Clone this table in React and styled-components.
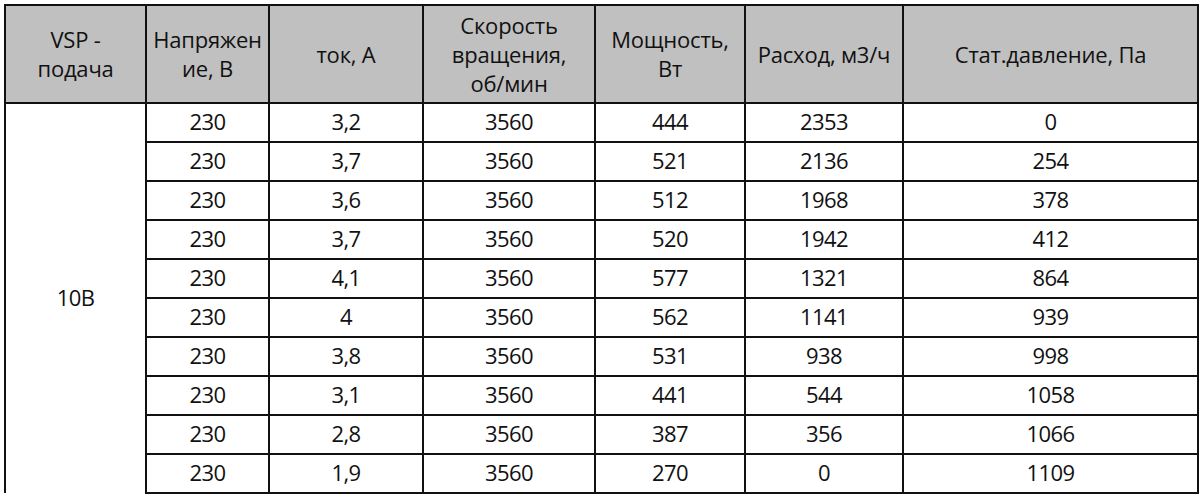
import React from 'react';
import styled, { createGlobalStyle } from 'styled-components';

const Global = createGlobalStyle`
  html, body { margin: 0; background: #fff; }
  body { font-family: "Open Sans", "Noto Sans", sans-serif; color: #111; }
`;

const Page = styled.div`
  padding: 4px 0 0 4px;
`;

const Table = styled.table`
  border-collapse: collapse;
  table-layout: fixed;
  width: 1195px;
  font-size: 22px;
`;

const HeadRow = styled.tr`
  height: 98px;
  background: #c0c0c0;
`;

const Th = styled.th`
  border: 2px solid #111;
  font-weight: 400;
  line-height: 29px;
  text-align: center;
  vertical-align: middle;
  padding: 0;
  white-space: nowrap;
  letter-spacing: -0.2px;
`;

const Row = styled.tr`
  height: 39px;
`;

const Td = styled.td`
  border: 2px solid #111;
  text-align: center;
  vertical-align: middle;
  padding: 0 0 4px;
  line-height: 24px;
  letter-spacing: -0.6px;
  ${p => p.$open && 'border-bottom: none;'}
`;

const cols = [141, 123, 154, 172, 150, 158, 295];

const rows = [
  ['230', '3,2', '3560', '444', '2353', '0'],
  ['230', '3,7', '3560', '521', '2136', '254'],
  ['230', '3,6', '3560', '512', '1968', '378'],
  ['230', '3,7', '3560', '520', '1942', '412'],
  ['230', '4,1', '3560', '577', '1321', '864'],
  ['230', '4', '3560', '562', '1141', '939'],
  ['230', '3,8', '3560', '531', '938', '998'],
  ['230', '3,1', '3560', '441', '544', '1058'],
  ['230', '2,8', '3560', '387', '356', '1066'],
  ['230', '1,9', '3560', '270', '0', '1109'],
];

export default function App() {
  return (
    <Page>
      <Global />
      <Table>
        <colgroup>
          {cols.map((w, i) => <col key={i} style={{ width: w }} />)}
        </colgroup>
        <thead>
          <HeadRow>
            <Th>VSP -<br />подача</Th>
            <Th>Напряжен<br />ие, В</Th>
            <Th>ток, А</Th>
            <Th>Скорость<br />вращения,<br />об/мин</Th>
            <Th>Мощность,<br />Вт</Th>
            <Th>Расход, м3/ч</Th>
            <Th>Стат.давление, Па</Th>
          </HeadRow>
        </thead>
        <tbody>
          {rows.map((r, i) => (
            <Row key={i}>
              {i === 0 && <Td rowSpan={rows.length} $open>10В</Td>}
              {r.map((v, j) => <Td key={j}>{v}</Td>)}
            </Row>
          ))}
        </tbody>
      </Table>
    </Page>
  );
}
